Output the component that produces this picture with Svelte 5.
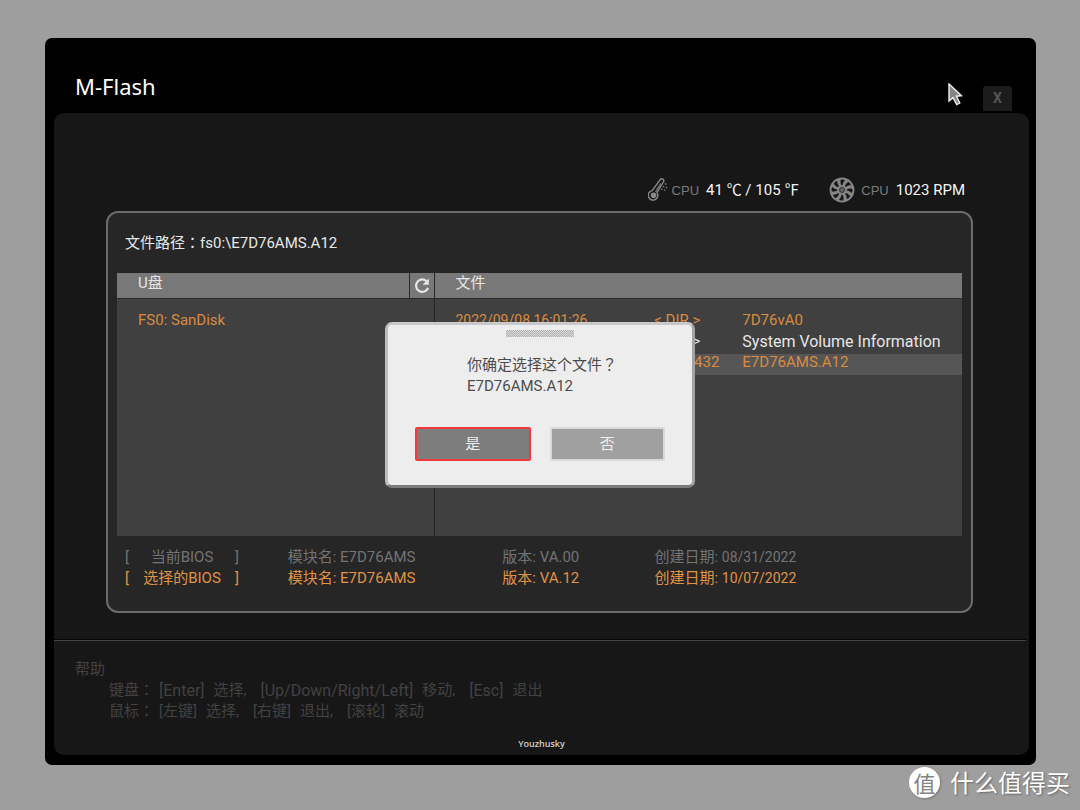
<script>
  const drives = ["FS0: SanDisk"];

  const files = [
    { date: "2022/09/08 16:01:26", size: "< DIR >", name: "7D76vA0", kind: "known" },
    { date: "2022/09/08 16:01:26", size: "< DIR >", name: "System Volume Information", kind: "plain" },
    { date: "2022/10/07 10:20:14", size: "33554432", name: "E7D76AMS.A12", kind: "known" },
  ];

  const bios = [
    { label: "当前BIOS", module: "E7D76AMS", version: "VA.00", date: "08/31/2022" },
    { label: "选择的BIOS", module: "E7D76AMS", version: "VA.12", date: "10/07/2022" },
  ];

  const help = [
    {
      device: "键盘",
      latin: true,
      hints: [["[Enter]", "选择,"], ["[Up/Down/Right/Left]", "移动,"], ["[Esc]", "退出"]],
    },
    {
      device: "鼠标",
      latin: false,
      hints: [["[左键]", "选择,"], ["[右键]", "退出,"], ["[滚轮]", "滚动"]],
    },
  ];

  const blades = [0, 45, 90, 135, 180, 225, 270, 315];

  let selected = $state(2);
  let asking = $state(true);

  function pick(i) {
    selected = i;
    asking = true;
  }
</script>

<div class="page">
  <main class="window">
    <header class="titlebar">
      <h1>M-Flash</h1>
      <button class="close" aria-label="Close">X</button>
    </header>

    <div class="panel">
      <div class="stats">
        <div class="stat">
          <svg width="20" height="24" viewBox="0 0 20 24" fill="none" stroke="#8a8a8a" aria-hidden="true">
            <path d="M4.2 12.6 L12 1.8 A2 2 0 0 1 15.4 4 L9 14.6 A4.8 4.8 0 1 1 4.2 12.6 Z" stroke-width="1.4" />
            <path d="M7.6 14 L13 5.4" stroke="#6e6e6e" stroke-width="1.6" />
            <circle cx="5.6" cy="17.2" r="2.8" fill="#8a8a8a" stroke="none" />
            <path d="M16.8 5.4 l1.6 1 M15 8.2 l1.2 .8 M17.8 9.2 l1.4 .9 M13.4 10.8 l1.2 .8 M16 11.8 l1.2 .8" stroke-width="1.2" />
          </svg>
          <span class="stat-label">CPU</span>
          <span class="stat-value">41 ℃ / 105 ℉</span>
        </div>
        <div class="stat fan">
          <svg width="26" height="26" viewBox="-13 -13 26 26" aria-hidden="true">
            <circle r="12.4" fill="#858585" />
            {#each blades as angle}
              <path d="M-.6 -4.8 C-1.6 -6.4 -1.8 -8.4 -1.2 -10.2 C.2 -10.8 2 -10.4 3 -9.6 C1.4 -8.2 .6 -6.6 .5 -4.8 Z" fill="#151515" transform="rotate({angle})" />
            {/each}
            <circle r="2.4" fill="#6a6a6a" stroke="#2a2a2a" stroke-width="1" />
          </svg>
          <span class="stat-label">CPU</span>
          <span class="stat-value">1023 RPM</span>
        </div>
      </div>

      <section class="card">
        <p class="path">文件路径<span class="mark">：</span>fs0:\E7D76AMS.A12</p>

        <div class="panes">
          <div class="pane">
            <div class="pane-head">
              <h2>U盘</h2>
              <button class="refresh" aria-label="Refresh">
                <svg width="18" height="18" viewBox="0 0 18 18" fill="none" stroke="#e6e6e6" stroke-width="2.2" aria-hidden="true">
                  <path d="M14 4.6 A6.2 6.2 0 1 0 15.1 10.8" />
                  <path d="M15.8 1.6 V7.8 H9.6 Z" fill="#e6e6e6" stroke="none" />
                </svg>
              </button>
            </div>
            <ul class="drives">
              {#each drives as drive}
                <li>{drive}</li>
              {/each}
            </ul>
          </div>

          <div class="pane">
            <div class="pane-head"><h2>文件</h2></div>
            <table class="files">
              <tbody>
                {#each files as file, i}
                  <tr class={file.kind} class:selected={i === selected} onclick={() => pick(i)}>
                    <td class="date">{file.date}</td>
                    <td class="size" class:dir={file.size === "< DIR >"}>{file.size}</td>
                    <td class="name">{file.name}</td>
                  </tr>
                {/each}
              </tbody>
            </table>
          </div>
        </div>

        <table class="bios">
          <tbody>
            {#each bios as row, i}
              <tr class:chosen={i === 1}>
                <th scope="row"><span class="bracket"><span>[</span><span>{row.label}</span><span>]</span></span></th>
                <td class="module">模块名: {row.module}</td>
                <td class="version">版本: {row.version}</td>
                <td>创建日期: <span class="created">{row.date}</span></td>
              </tr>
            {/each}
          </tbody>
        </table>
      </section>

      <footer>
        <div class="help">
          <p>帮助</p>
          {#each help as line}
            <p class="keys" class:latin={line.latin}>
              <span>{line.device}<span class="mark">：</span></span>
              {#each line.hints as [key, action]}
                <span class="key">{key}</span>
                <span class="action">{action}</span>
              {/each}
            </p>
          {/each}
        </div>
        <p class="credit">Youzhusky</p>
      </footer>
    </div>
  </main>

  {#if asking}
    <div class="overlay">
      <div class="dialog" role="dialog" aria-labelledby="question">
        <div class="grip"></div>
        <p class="question" id="question">你确定选择这个文件<span class="mark">？</span><br />{files[selected].name}</p>
        <div class="actions">
          <button class="yes" onclick={() => (asking = false)}>是</button>
          <button class="no" onclick={() => (asking = false)}>否</button>
        </div>
      </div>
    </div>
  {/if}

  <svg class="cursor" width="16" height="24" viewBox="0 0 16 24" aria-hidden="true">
    <path d="M1 1 V18 L5 14.6 L8.8 21.6 L11.8 20 L8.4 13.2 L13.4 12.8 Z" fill="#858585" stroke="#f0f0f0" stroke-width="1.4" />
  </svg>

  <div class="watermark">
    <span class="badge">值</span>
    <span>什么值得买</span>
  </div>
</div>

<style>
  :global(body) { margin: 0; background: #9e9e9e; }
  .page {
    position: relative; box-sizing: border-box; min-height: 100vh;
    padding: 38px 44px 45px 45px; display: flex;
    font: 15px/21px Roboto, "Noto Sans CJK SC", sans-serif; color: #e6e6e6;
  }
  h1, h2, p, ul { margin: 0; padding: 0; font-weight: 400; }
  button { font: inherit; padding: 0; cursor: pointer; }
  table { border-collapse: collapse; width: 100%; table-layout: fixed; }
  td, th { padding: 0; box-sizing: border-box; font-weight: 400; text-align: left; white-space: nowrap; }
  /* full-width marks sit in the middle of their box */
  .mark { font-family: "Noto Sans CJK TC", sans-serif; line-height: 1; }

  .window {
    flex: 1; display: flex; flex-direction: column; background: #000;
    border-radius: 7px; padding: 0 7px 10px 9px;
  }
  .titlebar { display: flex; justify-content: space-between; align-items: flex-end; height: 73px; padding: 0 17px 2px 21px; }
  h1 { font: 22px/28px "Noto Sans", sans-serif; color: #fff; padding-bottom: 11px; }
  .close {
    width: 29px; height: 25px; border: 0; border-radius: 3px 3px 0 0;
    background: #1c1c1c; color: #555; font-size: 14px; font-weight: 700;
  }

  .panel { flex: 1; display: flex; flex-direction: column; background: #171717; border-radius: 10px; }
  .stats { display: flex; justify-content: flex-end; padding: 64px 64px 8px 0; }
  .stat { display: flex; align-items: center; height: 26px; }
  .fan { margin-left: 30px; }
  .stat-label { font: 13px/20px "Liberation Sans", sans-serif; color: #7a7a7a; margin: 2px 7px 0 4px; }
  .fan .stat-label { margin-left: 6px; }
  .stat-value { color: #f4f4f4; padding-top: 1px; }

  .card {
    flex: 1; display: flex; flex-direction: column; margin: 0 56px 0 52px; padding: 20px 9px 22px;
    background: #262626; border: 2px solid #6b6b6b; border-radius: 12px;
  }
  .path { padding: 0 8px 19px; }
  .panes { flex: 1; display: grid; grid-template-columns: 3fr 5fr; gap: 1px; background: #262626; }
  .pane { background: #404040; min-width: 0; }
  .pane-head {
    display: flex; justify-content: space-between; height: 25px;
    background: #787878; border-bottom: 1px solid #2b2b2b;
  }
  h2 { font-size: 15px; line-height: 21px; padding-left: 21px; }
  .refresh {
    width: 25px; border: 0; border-left: 1px solid #2b2b2b; background: none;
    display: flex; align-items: center; justify-content: center;
  }
  .drives { list-style: none; padding: 11px 21px; color: #d98b40; }
  .files { margin-top: 13px; line-height: 17px; }
  .files td { padding-bottom: 4px; }
  .files .date { width: 40%; padding-left: 21px; font-size: 14px; }
  .files .size { width: 14%; text-align: right; }
  .files .dir { padding-right: 19px; word-spacing: normal; }
  .files .name { padding-left: 23px; }
  .plain .name { font-size: 16px; }
  .known { color: #d98b40; }
  .selected { background: #565656; }

  .bios { margin-top: 11px; color: #737373; }
  .bios th { width: 20.2%; }
  .bios .module { width: 25.4%; }
  .bios .version { width: 18%; }
  .bracket { display: flex; justify-content: space-between; width: 114px; padding-left: 8px; }
  .created { font-size: 14px; }
  .chosen { color: #e09345; }

  footer { margin: 27px 3px 0 0; padding: 18px 18px 5px 21px; border-top: 1px solid #454545; box-shadow: 0 -1px #050505; }
  .help { color: #424242; }
  .keys { display: flex; padding-left: 34px; }
  .key { margin: 0 9px 0 5px; }
  .latin .key { font-size: 16px; }
  .action { min-width: 37px; margin-right: 5px; }
  .credit { margin-top: 16px; text-align: center; font: 600 9px/12px "Open Sans", sans-serif; color: #d0d0d0; }

  .overlay { position: absolute; inset: 0; display: flex; align-items: center; justify-content: center; }
  .dialog {
    box-sizing: border-box; width: 310px; padding: 5px 27px 24px;
    background: #ededed; border: 3px solid; border-color: #c9c9c9 #a3a3a3 #7c7c7c #bdbdbd; border-radius: 7px;
    color: #4c4c4c;
  }
  .grip {
    width: 68px; height: 7px; margin: 0 auto;
    background: repeating-conic-gradient(#b0b0b0 0 25%, #dadada 0 50%) 0 0 / 2px 2px;
  }
  .question { padding: 18px 0 30px 52px; }
  .actions { display: flex; gap: 19px; }
  .actions button { flex: 1; height: 34px; border: 2px solid #d9d9d9; border-radius: 2px; color: #ececec; }
  .actions .yes { background: #7d7d7d; border-color: #f03a3a; }
  .actions .no { background: #a0a0a0; }

  .cursor { position: absolute; top: 83px; right: 116px; }
  .watermark {
    position: absolute; right: 10px; bottom: 12px; display: flex; align-items: center; gap: 10px;
    font: 24px/32px "Noto Sans CJK SC", sans-serif; color: #fff; text-shadow: 1px 1px 2px #666;
  }
  .badge {
    width: 31px; height: 31px; line-height: 30px; border-radius: 50%; background: #fff; color: #858585;
    text-align: center; font-size: 22px; text-shadow: none; box-shadow: 1px 1px 2px #777;
  }
</style>
